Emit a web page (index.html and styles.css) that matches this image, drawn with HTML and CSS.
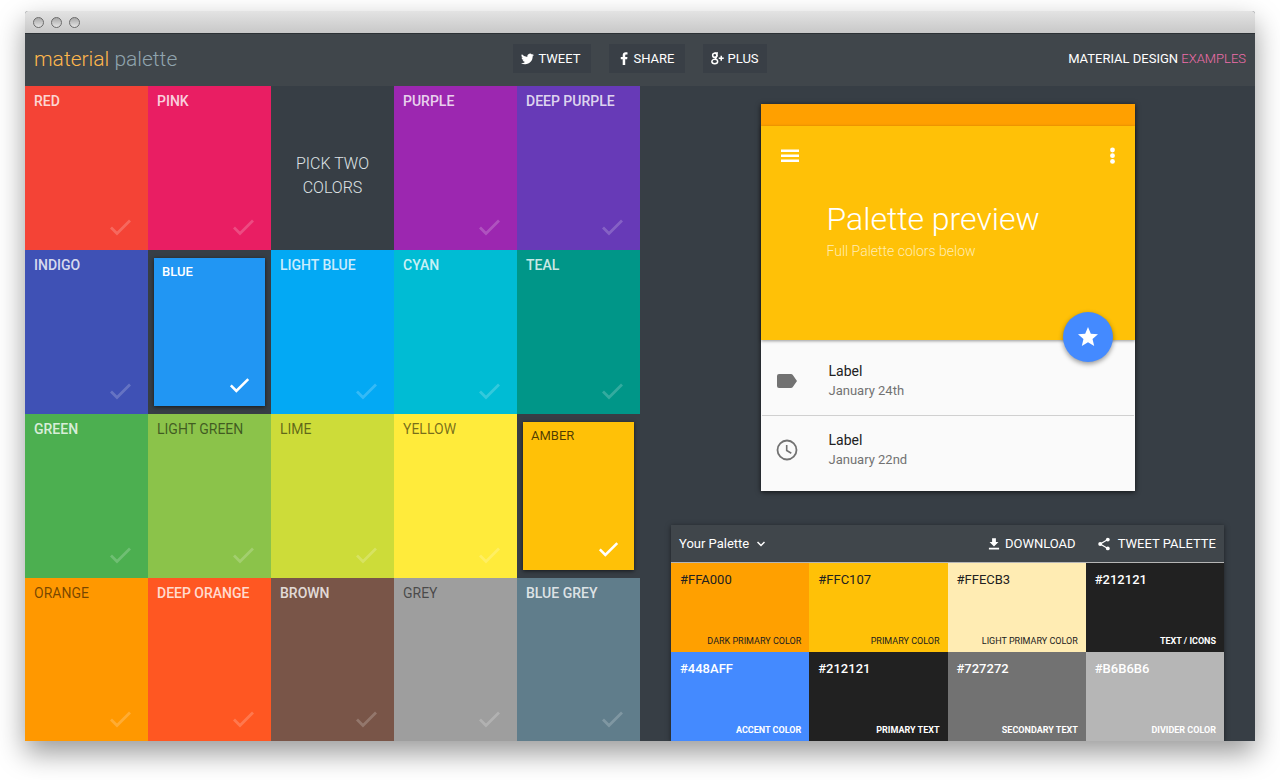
FILE: index.html
```html
<!DOCTYPE html>
<html lang="en">
<head>
<meta charset="utf-8">
<title>Material Palette</title>
<link rel="stylesheet" href="styles.css">
</head>
<body>
<svg class="defs" aria-hidden="true">
  <symbol id="check" viewBox="0 0 24 24"><path d="M2 12.500 8 18.500 21 5.500" fill="none" stroke="currentColor" stroke-width="2.800"/></symbol>
</svg>
<div class="window">
  <div class="titlebar"><span class="dot"></span><span class="dot"></span><span class="dot"></span></div>
  <header class="header">
    <a class="logo" href="#"><span class="logo-first">material</span> palette</a>
    <nav class="share">
      <a class="share-link" href="#"><svg width="13" height="12" viewBox="0 0 24 20" fill="currentColor"><path d="M24 2.400a10 10 0 0 1-2.800.8A5 5 0 0 0 23.300.5a10 10 0 0 1-3.100 1.200 4.900 4.900 0 0 0-8.400 4.500A14 14 0 0 1 1.700 1a4.900 4.900 0 0 0 1.500 6.600 5 5 0 0 1-2.200-.6 4.900 4.900 0 0 0 3.900 4.900 5 5 0 0 1-2.200.1 4.900 4.900 0 0 0 4.600 3.400A10 10 0 0 1 0 17.500 14 14 0 0 0 7.500 19.700c9.100 0 14.400-7.700 14-14.600A10 10 0 0 0 24 2.400z"/></svg>Tweet</a>
      <a class="share-link" href="#"><svg width="13" height="13" viewBox="0 0 26 26" fill="currentColor"><path d="M21 .8V5h-2.500c-1.800 0-2.100.9-2.100 2.200v2.600h4.500l-.6 4.500h-3.900V26h-5V14.300H7.500V9.800h3.900V6.300C11.400 2.500 13.700.5 17.200.5c1.600 0 3.300.1 3.800.3z"/></svg>Share</a>
      <a class="share-link share-plus" href="#"><svg width="13" height="13" viewBox="0 0 26 26" fill="none" stroke="currentColor" stroke-width="3"><circle cx="7.500" cy="6.500" r="4.200"/><path d="M7 2h7M11 4c2 3 1 5-1 7-2 2-1 3 1 4"/><ellipse cx="7.500" cy="19" rx="5.800" ry="4.300"/><path d="M15.500 12.500h10M20.500 7.500v10"/></svg>Plus</a>
    </nav>
    <a class="examples" href="#">Material Design <span class="examples-accent">Examples</span></a>
  </header>
  <main class="main">
    <section class="tiles" aria-label="Colors">
      <button class="tile red">Red<svg class="check"><use href="#check"/></svg></button>
      <button class="tile pink">Pink<svg class="check"><use href="#check"/></svg></button>
      <p class="hint">Pick two<br>colors</p>
      <button class="tile purple">Purple<svg class="check"><use href="#check"/></svg></button>
      <button class="tile deep-purple">Deep Purple<svg class="check"><use href="#check"/></svg></button>
      <button class="tile indigo">Indigo<svg class="check"><use href="#check"/></svg></button>
      <button class="tile blue selected" aria-pressed="true">Blue<svg class="check"><use href="#check"/></svg></button>
      <button class="tile light-blue">Light Blue<svg class="check"><use href="#check"/></svg></button>
      <button class="tile cyan">Cyan<svg class="check"><use href="#check"/></svg></button>
      <button class="tile teal">Teal<svg class="check"><use href="#check"/></svg></button>
      <button class="tile green">Green<svg class="check"><use href="#check"/></svg></button>
      <button class="tile light-green dark">Light Green<svg class="check"><use href="#check"/></svg></button>
      <button class="tile lime dark">Lime<svg class="check"><use href="#check"/></svg></button>
      <button class="tile yellow dark">Yellow<svg class="check"><use href="#check"/></svg></button>
      <button class="tile amber dark selected" aria-pressed="true">Amber<svg class="check"><use href="#check"/></svg></button>
      <button class="tile orange dark">Orange<svg class="check"><use href="#check"/></svg></button>
      <button class="tile deep-orange">Deep Orange<svg class="check"><use href="#check"/></svg></button>
      <button class="tile brown">Brown<svg class="check"><use href="#check"/></svg></button>
      <button class="tile grey dark">Grey<svg class="check"><use href="#check"/></svg></button>
      <button class="tile blue-grey">Blue Grey<svg class="check"><use href="#check"/></svg></button>
    </section>
    <section class="side">
      <article class="preview">
        <div class="statusbar"></div>
        <div class="hero">
          <div class="hero-bar">
            <button class="icon-button" aria-label="Menu"><svg width="24" height="24" viewBox="0 0 24 24" fill="currentColor"><path d="M3 5.500h18v2.600H3zM3 10.500h18v2.600H3zM3 15.500h18v2.600H3z"/></svg></button>
            <button class="icon-button" aria-label="More"><svg width="24" height="24" viewBox="0 0 24 24" fill="currentColor"><circle cx="12.500" cy="6" r="2.400"/><circle cx="12.500" cy="11.700" r="2.400"/><circle cx="12.500" cy="17.400" r="2.400"/></svg></button>
          </div>
          <h1 class="hero-title">Palette preview</h1>
          <p class="hero-text">Full Palette colors below</p>
          <button class="fab" aria-label="Favorite"><svg width="24" height="24" viewBox="0 0 24 24" fill="currentColor"><path d="M12 17.270 18.180 21l-1.640-7.030L22 9.240l-7.190-.61L12 2 9.190 8.630 2 9.240l5.460 4.730L5.820 21z"/></svg></button>
        </div>
        <ul class="list">
          <li class="item"><svg width="24" height="24" viewBox="0 0 24 24" fill="currentColor"><path d="M17.630 5.840C17.270 5.330 16.670 5 16 5H4a2 2 0 0 0-2 2v10a2 2 0 0 0 2 2h12c.67 0 1.270-.33 1.630-.84L22 12z"/></svg><div><div class="item-label">Label</div><div class="item-date">January 24th</div></div></li>
          <li class="item"><svg width="24" height="24" viewBox="0 0 24 24" fill="none" stroke="currentColor"><circle cx="12" cy="12" r="9.500" stroke-width="1.800"/><path d="M11.700 7v5.500l4.600 2.700" stroke-width="1.600"/></svg><div><div class="item-label">Label</div><div class="item-date">January 22nd</div></div></li>
        </ul>
      </article>
      <section class="palette">
        <div class="palette-bar">
          <button class="palette-name">Your Palette<svg width="8" height="6" viewBox="0 0 8 6" fill="none" stroke="currentColor" stroke-width="1.500"><path d="M.5 1 4 4.500 7.500 1"/></svg></button>
          <a class="palette-action" href="#"><svg width="14" height="14" viewBox="1 1 22 22" fill="currentColor"><path d="M19 9h-4V3H9v6H5l7 7zM4 18v2.500h16V18z"/></svg>Download</a>
          <a class="palette-action" href="#"><svg width="14" height="14" viewBox="1 1 22 22" fill="currentColor"><circle cx="18" cy="5" r="3"/><circle cx="6" cy="12" r="3"/><circle cx="18" cy="19" r="3"/><path d="M18 5 6 12l12 7" fill="none" stroke="currentColor" stroke-width="2"/></svg>Tweet palette</a>
        </div>
        <div class="swatches">
          <div class="swatch s-dark"><span>#FFA000</span><small>Dark primary color</small></div>
          <div class="swatch s-primary"><span>#FFC107</span><small>Primary color</small></div>
          <div class="swatch s-light"><span>#FFECB3</span><small>Light primary color</small></div>
          <div class="swatch s-ink bold"><span>#212121</span><small>Text / Icons</small></div>
          <div class="swatch s-accent bold"><span>#448AFF</span><small>Accent color</small></div>
          <div class="swatch s-ink bold"><span>#212121</span><small>Primary text</small></div>
          <div class="swatch s-secondary bold"><span>#727272</span><small>Secondary text</small></div>
          <div class="swatch s-divider bold"><span>#B6B6B6</span><small>Divider color</small></div>
        </div>
      </section>
    </section>
  </main>
</div>
</body>
</html>
```
FILE: styles.css
```css
* { box-sizing: border-box; }
body {
  margin: 0;
  height: 100vh;
  padding: 11px 25px 39px;
  overflow: hidden;
  background: #fff;
  font-family: Roboto, "Liberation Sans", sans-serif;
  font-size: 13px;
  color: #fff;
}
button { border: 0; padding: 0; background: none; font: inherit; color: inherit; }
a { color: inherit; text-decoration: none; }
h1, p, ul { margin: 0; padding: 0; }
svg { flex: none; display: block; }
.defs { position: absolute; width: 0; height: 0; }

.window {
  height: 100%;
  display: flex;
  flex-direction: column;
  border-radius: 3px 3px 0 0;
  background: #373e45;
  box-shadow: 0 12px 28px rgba(0, 0, 0, .4);
}
.titlebar {
  display: flex;
  align-items: center;
  gap: 7px;
  height: 22px;
  padding: 0 8px;
  border-radius: 3px 3px 0 0;
  background: linear-gradient(#e3e3e3, #c8c8c8);
}
.dot {
  width: 11px;
  height: 11px;
  border: 1px solid #6b6b6b;
  border-radius: 50%;
  background: linear-gradient(#a8a8a8, #e4e4e4);
}
.header {
  display: grid;
  grid-template-columns: 1fr auto 1fr;
  align-items: center;
  height: 53px;
  padding: 0 9px 3px;
  border-top: 1px solid #2c3135;
  background: #40464b;
}
.logo { font-size: 21px; font-weight: 300; color: #90a4ae; }
.logo-first { color: #ffb74d; }
.share { display: flex; gap: 18px; }
.share-link {
  display: flex;
  align-items: center;
  gap: 4px;
  height: 29px;
  padding: 0 10px 0 8px;
  background: #393f46;
  text-transform: uppercase;
}
.share-plus { padding-right: 8px; }
.examples { justify-self: end; text-transform: uppercase; }
.examples-accent { font-weight: 300; color: #f06eaa; }

.main { flex: 1; min-height: 0; display: grid; grid-template-columns: 1fr 1fr; overflow: hidden; }
.tiles { display: grid; grid-template-columns: repeat(5, 1fr); grid-auto-rows: 164px; }
.tile {
  display: flex;
  flex-direction: column;
  justify-content: space-between;
  padding: 6px 15px 11px 9px;
  font-size: 14px;
  font-weight: 500;
  line-height: 18px;
  text-align: left;
  text-transform: uppercase;
  color: rgba(255, 255, 255, .8);
}
.dark { font-weight: 400; color: rgba(0, 0, 0, .55); }
.check { align-self: flex-end; width: 24px; height: 24px; color: rgba(255, 255, 255, .2); }
.selected {
  margin: 8px 6px;
  padding: 5px 14px 10px 8px;
  font-size: 13px;
  color: #fff;
  box-shadow: 0 1px 4px rgba(0, 0, 0, .6);
}
.selected.dark { color: rgba(0, 0, 0, .7); }
.selected .check { width: 22px; height: 22px; color: #fff; }
.hint {
  display: flex;
  align-items: center;
  justify-content: center;
  padding-top: 16px;
  font-size: 16px;
  font-weight: 300;
  line-height: 24px;
  text-align: center;
  text-transform: uppercase;
  color: #dfe3e6;
}
.red { background: #f44336; }
.pink { background: #e91e63; }
.purple { background: #9c27b0; }
.deep-purple { background: #673ab7; }
.indigo { background: #3f51b5; }
.blue { background: #2196f3; }
.light-blue { background: #03a9f4; }
.cyan { background: #00bcd4; }
.teal { background: #009688; }
.green { background: #4caf50; }
.light-green { background: #8bc34a; }
.lime { background: #cddc39; }
.yellow { background: #ffeb3b; }
.amber { background: #ffc107; }
.orange { background: #ff9800; }
.deep-orange { background: #ff5722; }
.brown { background: #795548; }
.grey { background: #9e9e9e; }
.blue-grey { background: #607d8b; }

.side { padding: 18px 31px 0; }
.preview {
  max-width: 374px;
  margin: 0 auto 34px;
  background: #fafafa;
  box-shadow: 0 1px 5px rgba(0, 0, 0, .7);
}
.statusbar { height: 22px; background: #ffa000; }
.hero {
  position: relative;
  height: 214px;
  padding: 18px 11px 0 17px;
  background: #ffc107;
  box-shadow: 0 1px 3px rgba(0, 0, 0, .4);
}
.hero-bar { display: flex; justify-content: space-between; margin-bottom: 29px; }
.hero-title, .hero-text { padding-left: 49px; font-weight: 300; }
.hero-title { font-size: 32px; line-height: 44px; }
.hero-text { font-size: 14px; line-height: 20px; color: #ffecb3; }
.fab {
  position: absolute;
  right: 22px;
  bottom: -22px;
  display: grid;
  place-items: center;
  width: 50px;
  height: 50px;
  border-radius: 50%;
  background: #448aff;
  box-shadow: 0 2px 5px rgba(0, 0, 0, .4);
}
.list { list-style: none; padding: 6px 1px 7px; color: #727272; }
.item { display: flex; align-items: center; gap: 30px; height: 69px; padding: 0 13px; }
.item + .item { border-top: 1px solid #d0d0d0; }
.item-label, .item-date { font-size: 14px; line-height: 20px; }
.item-label { color: #212121; }
.item-date { font-size: 13px; }

.palette { box-shadow: 0 1px 5px rgba(0, 0, 0, .5); }
.palette-bar {
  display: flex;
  align-items: center;
  gap: 21px;
  height: 38px;
  padding: 0 8px;
  border-bottom: 1px solid #b6b6b6;
  background: #40464b;
}
.palette-name { display: flex; align-items: center; gap: 8px; margin-right: auto; }
.palette-action { display: flex; align-items: center; gap: 4px; text-transform: uppercase; }
.palette-action + .palette-action { gap: 7px; }
.swatches { display: grid; grid-template-columns: repeat(4, 1fr); grid-auto-rows: 89px; }
.swatch {
  display: flex;
  flex-direction: column;
  justify-content: space-between;
  padding: 9px 8px 5px 9px;
  color: #212121;
}
.swatch small { align-self: flex-end; font-size: 9px; line-height: 12px; text-transform: uppercase; }
.bold { font-weight: 500; color: #fff; }
.bold small { font-weight: 700; }
.s-dark { background: #ffa000; }
.s-primary { background: #ffc107; }
.s-light { background: #ffecb3; }
.s-ink { background: #212121; }
.s-accent { background: #448aff; }
.s-secondary { background: #727272; }
.s-divider { background: #b6b6b6; }
```
